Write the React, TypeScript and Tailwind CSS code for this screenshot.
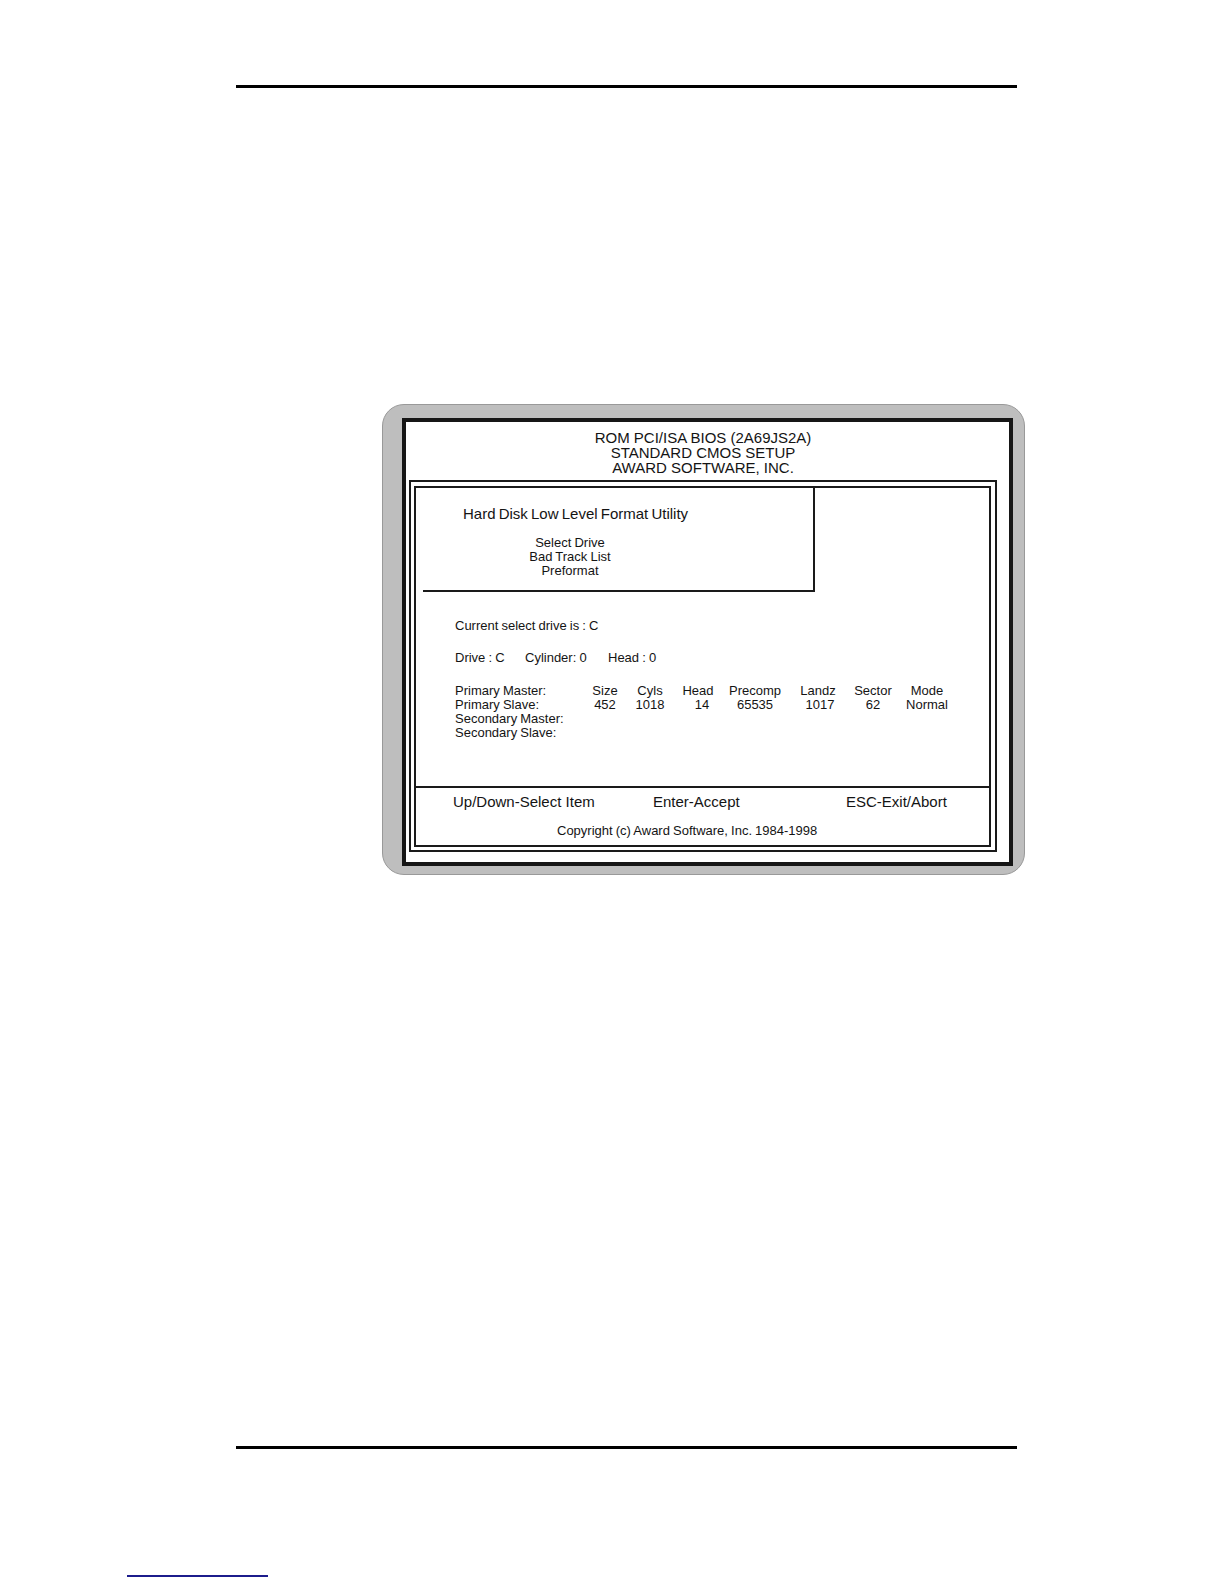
export default function App() {
  const font = { fontFamily: '"Liberation Sans", Arial, sans-serif' };

  const cols = [
    { name: "Size", value: "452", w: "w-[44px]", v: "" },
    { name: "Cyls", value: "1018", w: "w-[46px]", v: "" },
    { name: "Head", value: "14", w: "w-[50px]", v: "pl-2" },
    { name: "Precomp", value: "65535", w: "w-[64px]", v: "" },
    { name: "Landz", value: "1017", w: "w-[62px]", v: "pl-1" },
    { name: "Sector", value: "62", w: "w-[48px]", v: "" },
    { name: "Mode", value: "Normal", w: "w-[60px]", v: "" },
  ];

  return (
    <div
      className="w-[1224px] h-[1584px] bg-white text-[#141414] overflow-hidden pt-[85px]"
      style={font}
    >
      {/* top rule */}
      <div className="ml-[236px] w-[781px] h-[3px] bg-black" />

      {/* bios screen frame */}
      <div className="mt-[316px] ml-[382px] w-[643px] h-[471px] rounded-[22px] bg-[#bebebe] border border-[#999999] pl-[19px] pt-[13px] pr-[11px] pb-[8px]">
        <div className="h-full border-4 border-[#161616] bg-white flex flex-col">
          {/* header */}
          <div className="pt-[8px] pr-[9px] text-center text-[15px] leading-[15px]">
            <div>ROM PCI/ISA BIOS (2A69JS2A)</div>
            <div>STANDARD CMOS SETUP</div>
            <div>AWARD SOFTWARE, INC.</div>
          </div>

          {/* double border */}
          <div className="mt-[5px] ml-[3px] w-[588px] h-[372px] border-2 border-[#1a1a1a] pt-[4px] pl-[3px] pr-[4px] pb-[3px]">
            <div className="h-full border-2 border-[#1a1a1a] flex flex-col">
              {/* format utility menu */}
              <div className="ml-[7px] w-[392px] h-[104px] border-r-2 border-b-2 border-[#1a1a1a] pt-[17px] pl-[40px]">
                <div className="text-[15px] leading-[18px] [word-spacing:-1px]">
                  Hard Disk Low Level Format Utility
                </div>
                <div className="mt-[13px] ml-[37px] w-[140px] text-center text-[13px] leading-[14px] [word-spacing:-0.5px]">
                  <div>Select Drive</div>
                  <div>Bad Track List</div>
                  <div>Preformat</div>
                </div>
              </div>

              {/* drive info */}
              <div className="pl-[39px] text-[13px] [word-spacing:-0.5px]">
                <div className="mt-[26px] leading-[16px]">Current select drive is : C</div>
                <div className="mt-[16px] leading-[16px] flex">
                  <div className="w-[70px]">Drive : C</div>
                  <div className="w-[83px]">Cylinder: 0</div>
                  <div>Head : 0</div>
                </div>

                <div className="mt-[18px] flex leading-[14px]">
                  <div className="w-[128px]">
                    <div>Primary Master:</div>
                    <div>Primary Slave:</div>
                    <div>Secondary Master:</div>
                    <div>Secondary Slave:</div>
                  </div>
                  {cols.map((c) => (
                    <div key={c.name} className={`${c.w} text-center`}>
                      <div>{c.name}</div>
                      <div className={c.v}>{c.value}</div>
                    </div>
                  ))}
                </div>
              </div>

              <div className="flex-1" />

              {/* footer */}
              <div className="h-[59px] border-t-2 border-[#1a1a1a] pt-[5px]">
                <div className="flex pl-[37px] text-[15px] leading-[18px]">
                  <div className="w-[200px]">Up/Down-Select Item</div>
                  <div className="w-[193px]">Enter-Accept</div>
                  <div>ESC-Exit/Abort</div>
                </div>
                <div className="mt-[12px] ml-[141px] text-[13px] leading-[16px] [word-spacing:-0.5px]">
                  Copyright (c) Award Software, Inc. 1984-1998
                </div>
              </div>
            </div>
          </div>
        </div>
      </div>

      {/* bottom rule */}
      <div className="mt-[571px] ml-[236px] w-[781px] h-[3px] bg-black" />

      {/* link underline */}
      <div className="mt-[126px] ml-[127px] w-[141px] h-[2px] bg-[#1c1c8c]" />
    </div>
  );
}
